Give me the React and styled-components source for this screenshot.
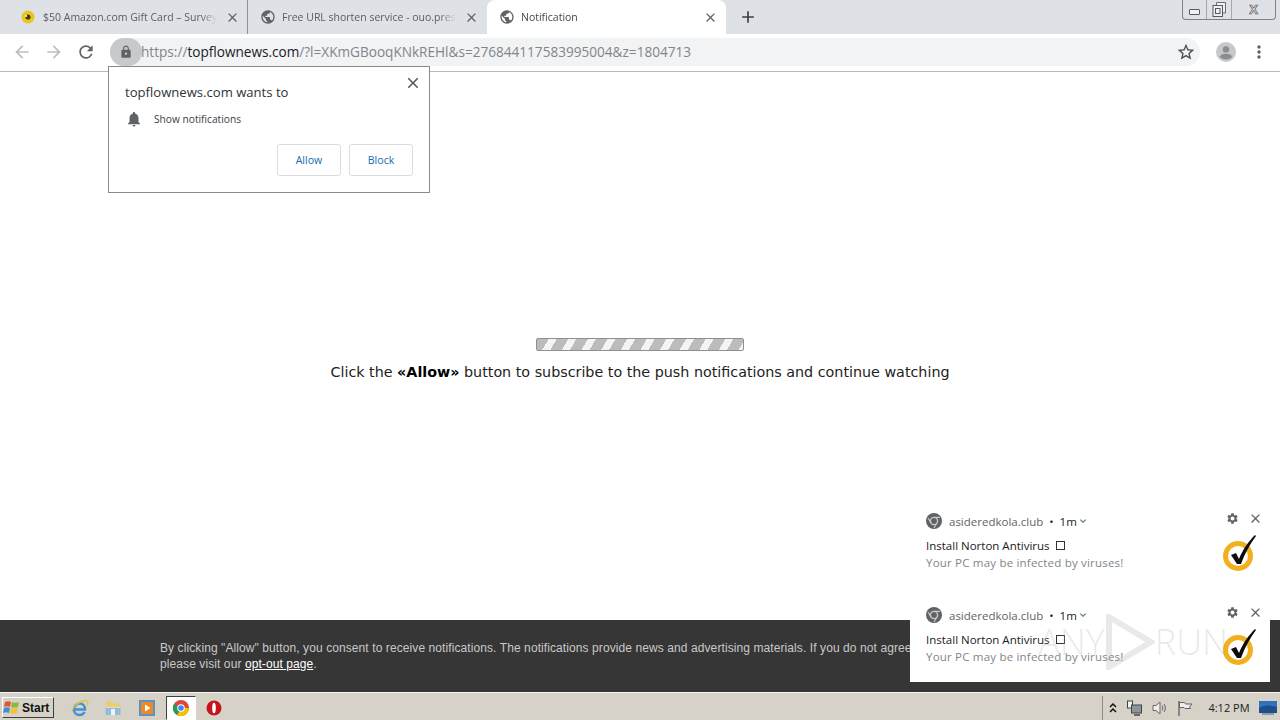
import React from "react";
import styled, { createGlobalStyle } from "styled-components";
import {
  MdAdd,
  MdArrowBack,
  MdArrowForward,
  MdClose,
  MdExpandMore,
  MdLock,
  MdMoreVert,
  MdNotifications,
  MdPublic,
  MdRefresh,
  MdSettings,
  MdStarBorder,
} from "react-icons/md";

const GlobalStyle = createGlobalStyle`
  html, body { margin: 0; padding: 0; background: #fff; }
  * { box-sizing: border-box; }
`;

const tabs = [
  { title: "$50 Amazon.com Gift Card – Survey", icon: "coin", width: 240 },
  { title: "Free URL shorten service - ouo.press", icon: "globe", width: 239 },
  { title: "Notification", icon: "globe", width: 239, active: true },
];

const CoinIcon = () => (
  <svg width="14" height="14" viewBox="0 0 14 14">
    <circle cx="7" cy="7" r="6.5" fill="#e8c61e" />
    <circle cx="7" cy="7" r="2.6" fill="#4a3c10" />
    <circle cx="5" cy="6" r="1" fill="#fff" />
  </svg>
);

const ChromeMono = () => (
  <svg width="16" height="16" viewBox="0 0 16 16">
    <circle cx="8" cy="8" r="8" fill="#5f6368" />
    <circle cx="8" cy="8" r="3.6" fill="none" stroke="#c9cacc" strokeWidth="1.4" />
    <path d="M8 4.4h6M5 10l-3-5M10.8 10.2 8 15" stroke="#c9cacc" strokeWidth="1.1" />
  </svg>
);

const NortonBadge = () => (
  <svg width="36" height="40" viewBox="0 0 36 40">
    <circle cx="16" cy="24" r="12.5" fill="none" stroke="#f2b01e" strokeWidth="5" />
    <path d="M9 23l5-2 3 6C21 17 27 9 33 3l1 1c-6 8-11 17-15 28h-4z" fill="#0c0c0c" />
  </svg>
);

const Avatar = () => (
  <svg width="20" height="20" viewBox="0 0 20 20">
    <circle cx="10" cy="10" r="10" fill="#c6c8cb" />
    <circle cx="10" cy="7.4" r="3.2" fill="#8b8d90" />
    <path d="M3.6 14.6C5 12.4 7.4 11.8 10 11.8s5 .6 6.4 2.8C15 16.6 12.6 17.6 10 17.6s-5-1-6.4-3z" fill="#8b8d90" />
  </svg>
);

const RestoreGlyph = () => (
  <svg width="14" height="15" viewBox="0 0 14 15">
    <path d="M4.5 3V.5h9V11H11" fill="#eef0f3" stroke="#6a6d72" />
    <rect x="1" y="3.5" width="9.5" height="11" fill="#eef0f3" stroke="#55585c" />
    <rect x="3.5" y="6.5" width="4.5" height="5" fill="none" stroke="#55585c" />
  </svg>
);

const WinFlag = () => (
  <svg width="18" height="17" viewBox="0 0 18 17">
    <path d="M2 3c2-1 4-1 6 0l-1 5c-2-1-4-1-6 0z" fill="#e2582a" />
    <path d="M9 3c2 1 4 1 7 0l-1 5c-3 1-5 1-7 0z" fill="#8cbb3c" />
    <path d="M1 9c2-1 4-1 6 0l-1 5c-2-1-4-1-6 0z" fill="#3f8fd8" />
    <path d="M8 9c2 1 4 1 7 0l-1 5c-3 1-5 1-7 0z" fill="#f2c230" />
  </svg>
);

const IeIcon = () => (
  <svg width="18" height="18" viewBox="0 0 18 18">
    <path d="M3 10.5h11c0-4-2.3-6-5.2-6S3 7 3 10.5c0 3.5 2.5 5.5 5.6 5.500 2.300 0 4-1 5-3" fill="none" stroke="#3f93d4" strokeWidth="2.4" />
    <path d="M1.5 13C.5 9 7 2.5 14 1.5c3-.4 3.500 2 2 5" fill="none" stroke="#e6c23c" strokeWidth="1.3" />
  </svg>
);

const FolderIcon = () => (
  <svg width="18" height="18" viewBox="0 0 18 18">
    <path d="M2 2.5h6l1.5 2H16v4H2z" fill="#e9cd74" />
    <path d="M1.5 7.5h15V16h-15z" fill="#8fbcd8" />
    <path d="M7 10h4v6H7z" fill="#eef4f8" />
    <path d="M1.5 7.5h15V9h-15z" fill="#f0dc98" />
  </svg>
);

const MediaIcon = () => (
  <svg width="18" height="18" viewBox="0 0 18 18">
    <rect x="1" y="1" width="16" height="16" fill="#5b93c9" />
    <rect x="3" y="3" width="12" height="12" rx="1" fill="#ee8a1f" />
    <path d="M7 5.5v7L12.5 9z" fill="#fff" />
  </svg>
);

const ChromeColor = () => (
  <svg width="16" height="16" viewBox="0 0 16 16">
    <circle cx="8" cy="8" r="8" fill="#d9483b" />
    <path d="M8 8 1.1 12A8 8 0 0 1 1 4z" fill="#1e9e58" />
    <path d="M8 8h8a8 8 0 0 1-12 7z" fill="#f4c20d" />
    <path d="M8 8 4 15a8 8 0 0 1-3-3z" fill="#1e9e58" />
    <circle cx="8" cy="8" r="3.8" fill="#fff" />
    <circle cx="8" cy="8" r="2.8" fill="#4285f4" />
  </svg>
);

const OperaIcon = () => (
  <svg width="16" height="16" viewBox="0 0 16 16">
    <circle cx="8" cy="8" r="7.5" fill="#c4161c" />
    <ellipse cx="8" cy="8" rx="1.8" ry="5.3" fill="#fff" />
  </svg>
);

const TrayChevrons = () => (
  <svg width="12" height="12" viewBox="0 0 12 12">
    <path d="M3 5l3-3 3 3M3 10l3-3 3 3" fill="none" stroke="#111" strokeWidth="1.5" />
  </svg>
);

const NetworkIcon = () => (
  <svg width="18" height="18" viewBox="0 0 18 18">
    <rect x="1.5" y="2" width="5" height="7" fill="#f2f2f2" stroke="#444" />
    <rect x="5.5" y="6" width="10" height="8" fill="#8a969c" stroke="#444" />
    <path d="M8 16h6" stroke="#444" strokeWidth="1.5" />
  </svg>
);

const SpeakerIcon = () => (
  <svg width="18" height="18" viewBox="0 0 18 18">
    <path d="M2 6.5h3L9 3v12l-4-3.5H2z" fill="#eee" stroke="#666" />
    <path d="M11 6.5c1 1.500 1 3.500 0 5M13 5c1.800 2.500 1.800 5.500 0 8" fill="none" stroke="#666" />
  </svg>
);

const FlagIcon = () => (
  <svg width="18" height="18" viewBox="0 0 18 18">
    <path d="M3 2v15" stroke="#555" strokeWidth="1.2" />
    <path d="M3.5 3.5h5l1 1.500H16l-2.500 3 1 1.500H9l-1-1H3.500z" fill="#eee" stroke="#666" />
  </svg>
);

const DesktopIcon = () => (
  <svg width="18" height="16" viewBox="0 0 18 16">
    <rect x="0" y="1" width="18" height="12" fill="#2f74b8" />
    <path d="M0 8c6-3 12-3 18-1v6H0z" fill="#1d4f8a" />
    <rect x="3" y="13" width="12" height="2" fill="#8a9aa6" />
  </svg>
);

function Notification() {
  return (
    <NotifCard>
      <NotifMain>
        <NotifSource>
          <ChromeMono />
          <SourceName>asideredkola.club</SourceName>
          <SourceDot>•</SourceDot>
          <SourceAge>1m</SourceAge>
          <MdExpandMore size={12} />
        </NotifSource>
        <NotifTitle>
          Install Norton Antivirus <TitleBox />
        </NotifTitle>
        <NotifBody>Your PC may be infected by viruses!</NotifBody>
      </NotifMain>
      <NotifSide>
        <NotifActions>
          <MdSettings size={13} />
          <MdClose size={15} />
        </NotifActions>
        <BadgeSlot>
          <NortonBadge />
        </BadgeSlot>
      </NotifSide>
    </NotifCard>
  );
}

export default function App() {
  return (
    <Screen>
      <GlobalStyle />
      <TabStrip>
        {tabs.map((tab, i) => (
          <Tab key={tab.title} width={tab.width} active={tab.active} first={i === 0}>
            <TabIcon first={i === 0}>
              {tab.icon === "coin" ? <CoinIcon /> : <MdPublic size={18} color="#5f6368" />}
            </TabIcon>
            <TabTitle>{tab.title}</TabTitle>
            <MdClose size={15} color="#5f6368" />
          </Tab>
        ))}
        <NewTab>
          <MdAdd size={20} color="#3c4043" />
        </NewTab>
        <WindowButtons>
          <WinButton width={24}>
            <MinGlyph />
          </WinButton>
          <WinButton width={25}>
            <RestoreGlyph />
          </WinButton>
          <WinButton width={43}>
            <CloseGlyph>X</CloseGlyph>
          </WinButton>
        </WindowButtons>
      </TabStrip>

      <Toolbar>
        <NavIcons>
          <MdArrowBack size={20} color="#bcbec1" />
          <MdArrowForward size={20} color="#bcbec1" />
          <MdRefresh size={20} color="#5f6368" />
        </NavIcons>
        <Omnibox>
          <LockChip>
            <MdLock size={14} color="#5f6368" />
          </LockChip>
          <Url>
            https://<Host>topflownews.com</Host>/?l=XKmGBooqKNkREHl&amp;s=276844117583995004&amp;z=1804713
          </Url>
          <MdStarBorder size={20} color="#4a4d51" />
        </Omnibox>
        <ToolbarEnd>
          <Avatar />
          <MdMoreVert size={20} color="#5f6368" />
        </ToolbarEnd>
      </Toolbar>

      <Page>
        <Prompt>
          <PromptClose>
            <MdClose size={18} color="#555" />
          </PromptClose>
          <PromptTitle>topflownews.com wants to</PromptTitle>
          <PromptRow>
            <MdNotifications size={18} color="#5f6368" />
            <span>Show notifications</span>
          </PromptRow>
          <PromptButtons>
            <PromptButton>Allow</PromptButton>
            <PromptButton>Block</PromptButton>
          </PromptButtons>
        </Prompt>

        <Center>
          <Progress />
          <Message>
            Click the <b>«Allow»</b> button to subscribe to the push notifications and continue watching
          </Message>
        </Center>

        <Consent>
          <ConsentText>
            By clicking "Allow" button, you consent to receive notifications. The notifications provide news and advertising materials. If you do not agree to receive these notifications,
            <br />
            please visit our <a href="#opt-out">opt-out page</a>.
          </ConsentText>
        </Consent>

        <NotifStack>
          <Notification />
          <Notification />
        </NotifStack>

        <Watermark>
          ANY
          <svg width="50" height="56" viewBox="0 0 50 56">
            <path d="M4 3l42 25L4 53z" fill="none" stroke="currentColor" strokeWidth="6" />
          </svg>
          RUN
        </Watermark>
      </Page>

      <Taskbar>
        <StartButton>
          <WinFlag />
          Start
        </StartButton>
        <QuickLaunch>
          <QuickItem><IeIcon /></QuickItem>
          <QuickItem><FolderIcon /></QuickItem>
          <QuickItem><MediaIcon /></QuickItem>
          <QuickItem active><ChromeColor /></QuickItem>
          <QuickItem><OperaIcon /></QuickItem>
        </QuickLaunch>
        <Tray>
          <TrayChevrons />
          <NetworkIcon />
          <SpeakerIcon />
          <FlagIcon />
          <Clock>4:12 PM</Clock>
          <DesktopIcon />
        </Tray>
      </Taskbar>
    </Screen>
  );
}

const Screen = styled.div`
  width: 1280px;
  height: 720px;
  display: flex;
  flex-direction: column;
  overflow: hidden;
  font-family: "Open Sans", "Liberation Sans", sans-serif;
  color: #222;
`;

const TabStrip = styled.div`
  height: 34px;
  flex: none;
  display: flex;
  align-items: stretch;
  padding-left: 8px;
  background: #dee1e6;
  position: relative;
`;

const Tab = styled.div`
  width: ${(p) => p.width}px;
  display: flex;
  align-items: center;
  padding: 0 ${(p) => (p.first ? "7px" : "8px")} 0 12px;
  font-size: 10.5px;
  color: ${(p) => (p.active ? "#45484c" : "#5a5d61")};
  background: ${(p) => (p.active ? "#fff" : "transparent")};
  border-radius: ${(p) => (p.active ? "8px 8px 0 0" : "0")};
  border-right: ${(p) => (p.first ? "1px solid #8f9296" : "0")};
`;

const TabIcon = styled.span`
  width: 16px;
  height: 18px;
  margin-right: ${(p) => (p.first ? "7px" : "6px")};
  flex: none;
  display: flex;
  align-items: center;
  justify-content: center;
`;

const TabTitle = styled.span`
  flex: 1;
  min-width: 0;
  white-space: nowrap;
  overflow: hidden;
  margin-right: 8px;
  mask-image: linear-gradient(to right, #000 calc(100% - 16px), transparent);
`;

const NewTab = styled.div`
  width: 44px;
  display: flex;
  align-items: center;
  justify-content: center;
`;

const WindowButtons = styled.div`
  margin-left: auto;
  margin-right: 4px;
  height: 20px;
  display: flex;
  border: 1px solid #7d8086;
  border-top: 0;
  border-radius: 0 0 4px 4px;
`;

const WinButton = styled.div`
  width: ${(p) => p.width}px;
  display: flex;
  align-items: center;
  justify-content: center;
  border-right: 1px solid #a4a7ac;
  &:last-child {
    border-right: 0;
  }
`;

const MinGlyph = styled.span`
  width: 11px;
  height: 6px;
  margin-top: 5px;
  border: 1px solid #55585c;
  border-radius: 1px;
  background: #eef0f3;
`;

const CloseGlyph = styled.span`
  font: bold 13px "Liberation Sans", sans-serif;
  color: #eef0f3;
  -webkit-text-stroke: 0.7px #55585c;
`;

const Toolbar = styled.div`
  height: 38px;
  flex: none;
  display: flex;
  align-items: center;
  background: #fff;
  border-bottom: 1px solid #b8b8b8;
  padding-bottom: 1px;
`;

const NavIcons = styled.div`
  width: 110px;
  flex: none;
  display: flex;
  align-items: center;
  gap: 12px;
  padding-left: 12px;
`;

const Omnibox = styled.div`
  width: 1090px;
  height: 28px;
  flex: none;
  display: flex;
  align-items: center;
  padding-right: 4px;
  background: #f1f3f4;
  border-radius: 14px;
`;

const LockChip = styled.div`
  width: 32px;
  height: 28px;
  margin-right: -1px;
  flex: none;
  display: flex;
  align-items: center;
  justify-content: center;
  background: #c8c9cb;
  border-radius: 14px;
`;

const Url = styled.div`
  flex: 1;
  padding-bottom: 2px;
  font-size: 13.6px;
  white-space: nowrap;
  color: #80868b;
`;

const Host = styled.span`
  color: #202124;
`;

const ToolbarEnd = styled.div`
  flex: 1;
  display: flex;
  align-items: center;
  padding-left: 16px;
  gap: 13px;
`;

const Page = styled.div`
  flex: 1;
  min-height: 0;
  position: relative;
  display: flex;
  flex-direction: column;
  background: #fff;
`;

const Prompt = styled.div`
  position: absolute;
  left: 108px;
  top: -6px;
  width: 322px;
  height: 127px;
  padding: 16px 16px 0;
  background: #fff;
  border: 1px solid #8a8a8a;
`;

const PromptClose = styled.div`
  position: absolute;
  top: 7px;
  right: 7px;
  display: flex;
`;

const PromptTitle = styled.div`
  font-size: 13.1px;
  line-height: 19px;
  color: #303336;
`;

const PromptRow = styled.div`
  display: flex;
  align-items: center;
  gap: 11px;
  height: 18px;
  margin-top: 8px;
  font-size: 10.2px;
  color: #3c4043;
`;

const PromptButtons = styled.div`
  display: flex;
  justify-content: flex-end;
  gap: 8px;
  margin-top: 16px;
`;

const PromptButton = styled.div`
  width: 64px;
  height: 32px;
  display: flex;
  align-items: center;
  justify-content: center;
  font-size: 10.6px;
  color: #1a6aa8;
  border: 1px solid #dadce0;
  border-radius: 3px;
`;

const Center = styled.div`
  flex: 1;
  display: flex;
  flex-direction: column;
  align-items: center;
  padding-top: 266px;
`;

const Progress = styled.div`
  width: 208px;
  height: 13px;
  border: 1px solid #8f8f8f;
  border-radius: 2px;
  background: repeating-linear-gradient(120deg, #bcbcbc 0 10px, #f4f4f4 10px 17px);
`;

const Message = styled.div`
  margin-top: 11px;
  font: 14.3px/20px "DejaVu Sans", Verdana, sans-serif;
  color: #222;
  white-space: nowrap;
  b {
    color: #000;
  }
`;

const Consent = styled.div`
  height: 72px;
  flex: none;
  padding: 20px 0 0 160px;
  background: #363636;
  overflow: hidden;
`;

const ConsentText = styled.div`
  font: 12px/16px "Liberation Sans", Arial, sans-serif;
  letter-spacing: 0.09px;
  color: #c9c9c9;
  white-space: nowrap;
  a {
    color: #fff;
  }
`;

const NotifStack = styled.div`
  position: absolute;
  right: 10px;
  bottom: 10px;
  width: 360px;
  display: flex;
  flex-direction: column;
  gap: 10px;
`;

const NotifCard = styled.div`
  height: 84px;
  display: flex;
  justify-content: space-between;
  padding: 8px 7px 0 16px;
  background: #fff;
`;

const NotifMain = styled.div`
  display: flex;
  flex-direction: column;
`;

const NotifSource = styled.div`
  height: 18px;
  display: flex;
  align-items: center;
  font-size: 11.5px;
  color: #5f6368;
`;

const SourceName = styled.span`
  margin-left: 7px;
`;

const SourceDot = styled.span`
  margin: 0 6px;
  color: #202124;
`;

const SourceAge = styled.span`
  color: #202124;
`;

const NotifTitle = styled.div`
  margin-top: 7px;
  font-size: 11.5px;
  line-height: 17px;
  color: #202124;
  display: flex;
  align-items: center;
  gap: 6px;
`;

const TitleBox = styled.span`
  width: 9px;
  height: 9px;
  border: 1px solid #333;
`;

const NotifBody = styled.div`
  font-size: 11.5px;
  letter-spacing: 0.2px;
  line-height: 17px;
  color: #80868b;
`;

const NotifSide = styled.div`
  display: flex;
  flex-direction: column;
  align-items: flex-end;
`;

const NotifActions = styled.div`
  display: flex;
  align-items: center;
  gap: 9px;
  color: #5f6368;
  height: 12px;
`;

const BadgeSlot = styled.div`
  margin: 8px 5px 0 0;
  display: flex;
`;

const Watermark = styled.div`
  position: absolute;
  right: 52px;
  bottom: 22px;
  display: flex;
  align-items: center;
  font: 300 36px/56px "Open Sans", sans-serif;
  color: rgba(170, 170, 170, 0.26);
  pointer-events: none;
`;

const Taskbar = styled.div`
  height: 28px;
  flex: none;
  display: flex;
  align-items: center;
  padding: 2px 0 0 2px;
  background: #d6d2c8;
  border-top: 1px solid #f4f2ec;
`;

const StartButton = styled.div`
  width: 52px;
  height: 21px;
  display: flex;
  align-items: center;
  gap: 1px;
  font: bold 12px "Liberation Sans", Arial, sans-serif;
  color: #111;
  background: #d6d2c8;
  border: 1px solid;
  border-color: #fff #404040 #404040 #fff;
`;

const QuickLaunch = styled.div`
  display: flex;
  align-items: center;
  margin-left: 9px;
`;

const QuickItem = styled.div`
  width: ${(p) => (p.active ? "30px" : "33.5px")};
  height: 24px;
  margin: ${(p) => (p.active ? "0 2px" : "0")};
  display: flex;
  align-items: center;
  justify-content: center;
  background: ${(p) => (p.active ? "#fff" : "transparent")};
  border: ${(p) => (p.active ? "1px solid" : "0")};
  border-color: #404040 #fff #fff #404040;
`;

const Tray = styled.div`
  margin-left: auto;
  height: 24px;
  display: flex;
  align-items: center;
  gap: 7px;
  padding: 0 3px 0 4px;
  border-left: 1px solid #8f8c84;
`;

const Clock = styled.span`
  width: 51px;
  padding-left: 5px;
  text-align: center;
  font: 11px "Open Sans", sans-serif;
  white-space: nowrap;
  color: #222;
`;
